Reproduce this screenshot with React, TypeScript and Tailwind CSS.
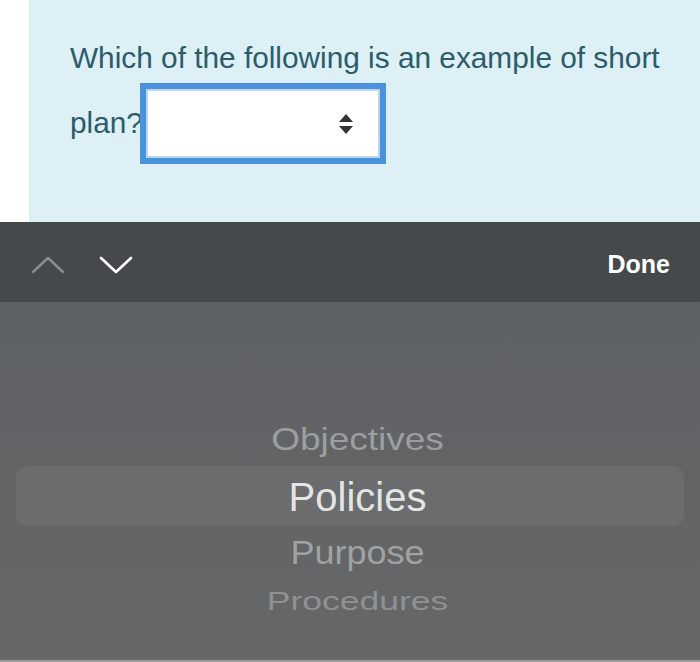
import { useState } from 'react';

const options = ['Objectives', 'Policies', 'Purpose', 'Procedures'];

export default function App() {
  const [selected] = useState('Policies');

  return (
    <div className="flex h-[662px] w-[700px] flex-col overflow-hidden bg-white" style={{ fontFamily: '"Liberation Sans", Arial, sans-serif' }}>
      <div className="flex h-[222px]">
        <div className="w-[29px] bg-white" />
        <div className="flex-1 bg-[#dcf0f6] pl-[41px] pt-[33px] text-[29.8px] text-[#2d5b69]">
          <p className="leading-[50px]">Which of the following is an example of short</p>
          <div className="flex items-center">
            <span>plan?</span>
            <div className="-ml-[3px] flex h-[81px] w-[246px] items-center justify-end border-[6px] border-[#4a93dc] bg-white pr-[26px] outline outline-2 -outline-offset-[8px] outline-[#b9d7f2]">
              <svg width="16" height="24" viewBox="0 0 16 24" className="fill-[#333]">
                <path d="M8 2 L15 10 H1 Z" />
                <path d="M8 22 L15 14 H1 Z" />
              </svg>
            </div>
          </div>
        </div>
      </div>

      <div className="flex h-[80px] items-center justify-between bg-[#45494b] pl-[31px] pr-[30px] pt-[5px]">
        <div className="flex items-center gap-[34px]">
          <svg width="34" height="20" viewBox="0 0 34 20" fill="none" stroke="#8a8d8f" strokeWidth="2.4" strokeLinecap="round" strokeLinejoin="round">
            <path d="M2 17 L17 3 L32 17" />
          </svg>
          <svg width="34" height="20" viewBox="0 0 34 20" fill="none" stroke="#ffffff" strokeWidth="2.6" strokeLinecap="round" strokeLinejoin="round">
            <path d="M2 3 L17 17 L32 3" />
          </svg>
        </div>
        <span className="text-[25px] font-bold text-white">Done</span>
      </div>

      <div className="relative flex flex-1 flex-col items-center bg-gradient-to-b from-[#5f6265] via-[#626466] to-[#656768] pl-[15px] pt-[118px]">
        <div className="absolute left-[16px] right-[16px] top-[164px] h-[60px] rounded-[12px] bg-white/[0.05]" />
        {options.map((o) => {
          const isSel = o === selected;
          const size =
            o === 'Objectives' ? 'text-[37px] h-[40px] text-[#9c9ea0] scale-y-[0.87]' :
            o === 'Policies' ? 'text-[40px] h-[74px] text-[#e4e4e4]' :
            o === 'Purpose' ? 'text-[36px] h-[38px] text-[#a0a2a4] scale-y-[0.93]' :
            'text-[35.5px] h-[60px] text-[#8f9193] scale-y-[0.74]';
          return (
            <div key={o} className={`relative flex items-center justify-center ${size} ${isSel ? 'font-normal' : ''}`}>
              {o}
            </div>
          );
        })}
        <div className="absolute bottom-0 left-0 right-0 h-[2px] bg-[#9a9c9e]" />
      </div>
    </div>
  );
}
